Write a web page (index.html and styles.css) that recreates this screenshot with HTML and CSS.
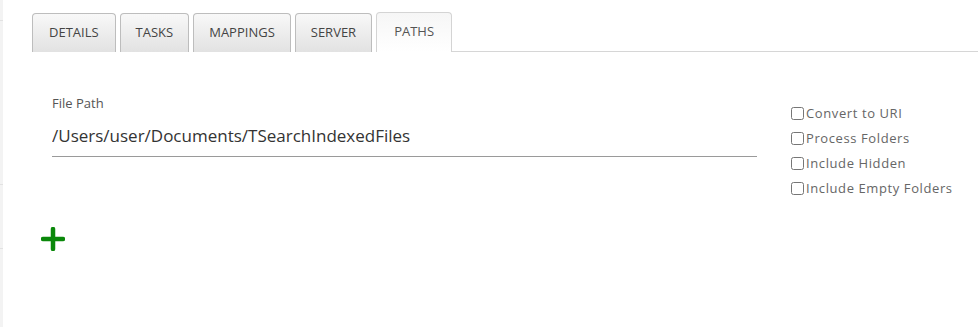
FILE: index.html
```html
<!DOCTYPE html>
<html lang="en">
  <head>
    <meta charset="UTF-8" />
    <title>Paths</title>
    <link rel="stylesheet" href="styles.css">
  </head>
  <body>
    <div class="layout">
      <div class="side-strip">
        <div class="strip-cell strip-a"></div>
        <div class="strip-cell strip-b"></div>
        <div class="strip-cell strip-c"></div>
        <div class="strip-cell"></div>
      </div>

      <div class="main">
        <ul class="tabs">
          <li class="tab">DETAILS</li>
          <li class="tab">TASKS</li>
          <li class="tab">MAPPINGS</li>
          <li class="tab">SERVER</li>
          <li class="tab active">PATHS</li>
          <li class="tab-fill"></li>
        </ul>

        <div class="path-row">
          <div class="field">
            <label class="field-label">File Path</label>
            <input class="field-input" type="text" value="/Users/user/Documents/TSearchIndexedFiles" />
          </div>
          <div class="options">
            <label class="option"><input type="checkbox" />Convert to URI</label>
            <label class="option"><input type="checkbox" />Process Folders</label>
            <label class="option"><input type="checkbox" />Include Hidden</label>
            <label class="option"><input type="checkbox" />Include Empty Folders</label>
          </div>
        </div>

        <button class="add-btn" title="Add path">
          <svg width="24" height="24" viewBox="0 0 24 24">
            <path d="M12 2 V22 M2 12 H22" stroke="#0a880a" stroke-width="4.5" stroke-linecap="round" fill="none" />
          </svg>
        </button>
      </div>
    </div>
  </body>
</html>
```

FILE: styles.css
```css
body {
  margin: 0;
  font-family: "Open Sans", "Liberation Sans", sans-serif;
  background-color: #ffffff;
  color: #333;
}

.layout {
  display: flex;
  height: 327px;
}

.side-strip {
  width: 3px;
  display: flex;
  flex-direction: column;
  background-color: #f3f3f3;
}

.strip-cell {
  flex: 1;
  border-top: 1px solid #e2e2e2;
}

.strip-cell:first-child {
  border-top: none;
  flex: 0 0 20px;
}

.strip-b {
  flex: 0 0 163px;
}

.strip-c {
  flex: 0 0 63px;
}

.main {
  flex: 1;
  padding-top: 12px;
}

.tabs {
  list-style: none;
  margin: 0;
  padding: 0 0 0 29px;
  display: flex;
  align-items: flex-end;
  gap: 4px;
}

.tab {
  height: 38px;
  line-height: 37px;
  padding: 0 15px;
  font-size: 13px;
  color: #444;
  border: 1px solid #bdbdbd;
  border-bottom: none;
  border-radius: 4px 4px 0 0;
  background: linear-gradient(#f8f8f8, #e2e2e2);
}

.tab:first-child {
  padding: 0 16px;
}

.tab.active {
  background: linear-gradient(#f6f6f6, #ffffff);
  border-color: #d4d4d4;
  color: #555;
  height: 39px;
  padding: 0 17px;
}

.tab-fill {
  flex: 1;
  height: 0;
  border-bottom: 1px solid #d6d6d6;
  margin-left: -4px;
}

.path-row {
  display: flex;
  padding: 42px 0 0 49px;
}

.field {
  width: 705px;
  display: flex;
  flex-direction: column;
}

.field-label {
  font-size: 13px;
  color: #555;
  font-weight: 500;
}

.field-input {
  font-family: inherit;
  font-size: 17px;
  color: #333;
  border: none;
  border-bottom: 1px solid #9a9a9a;
  padding: 12px 0 9px 0;
  outline: none;
}

.options {
  display: flex;
  flex-direction: column;
  gap: 7px;
  padding: 10px 0 0 34px;
}

.option {
  display: flex;
  align-items: center;
  font-size: 13px;
  letter-spacing: 0.6px;
  color: #666;
  height: 18px;
}

.option input {
  margin: 0 2px 0 0;
  width: 13px;
  height: 13px;
}

.add-btn {
  margin: 30px 0 0 38px;
  padding: 0;
  border: none;
  background: none;
  cursor: pointer;
  display: block;
}
```
